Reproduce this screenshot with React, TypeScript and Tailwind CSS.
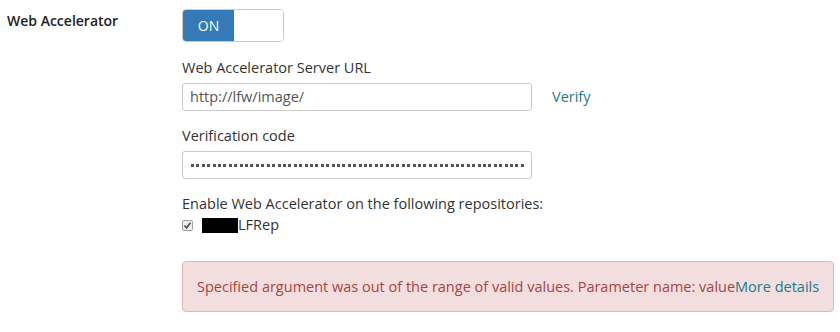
import React from "react";

export default function App() {
  const dots = Array.from({ length: 62 });
  return (
    <div
      className="w-[840px] h-[332px] bg-white text-[#333333] text-[14.5px]"
      style={{ fontFamily: '"Open Sans", "Noto Sans", sans-serif' }}
    >
      <div className="flex pt-[9px]">
        <div className="w-[182px] pl-[7px] pt-[2px] font-semibold text-[14px] leading-[20px] text-[#222]">
          Web Accelerator
        </div>
        <div className="flex flex-col w-[652px]">
          <div className="flex w-[102px] h-[33px] rounded-[4px] border border-[#cccccc] overflow-hidden">
            <div className="w-[51px] bg-[#337ab7] text-white flex items-center justify-center text-[14px]">
              ON
            </div>
            <div className="flex-1 bg-white" />
          </div>

          <div className="mt-[16px] leading-[20px]">Web Accelerator Server URL</div>
          <div className="flex items-center mt-[5px]">
            <div className="w-[350px] h-[28px] border border-[#cccccc] rounded-[3px] flex items-center px-[7px] text-[#555]">
              http://lfw/image/
            </div>
            <a className="ml-[20px] text-[#1b7b8c]">Verify</a>
          </div>

          <div className="mt-[15px] leading-[20px]">Verification code</div>
          <div className="mt-[5px] w-[350px] h-[28px] border border-[#cccccc] rounded-[3px] flex items-center pl-[8px]">
            <div className="flex justify-between w-[333px]">
              {dots.map((_, i) => (
                <div key={i} className="w-[3px] h-[3px] bg-[#555]" />
              ))}
            </div>
          </div>

          <div className="mt-[15px] leading-[20px]">
            Enable Web Accelerator on the following repositories:
          </div>
          <div className="flex items-center h-[22px]">
            <div className="w-[11px] h-[11px] border border-[#a0a0a0] rounded-[2px] bg-[#eeeeee] flex items-center justify-center">
              <svg width="9" height="9" viewBox="0 0 9 9">
                <path d="M1.5 4.5 L3.5 6.8 L7.5 1.8" stroke="#555" strokeWidth="1.8" fill="none" />
              </svg>
            </div>
            <div className="ml-[9px] w-[36px] h-[15px] bg-black" />
            <span>LFRep</span>
          </div>

          <div className="mt-[25px] w-[652px] h-[51px] bg-[#f2dede] border border-[#e3b6b9] rounded-[4px] flex items-center pl-[14px] text-[#a94442]">
            Specified argument was out of the range of valid values. Parameter name: value
            <a className="text-[#1b7b8c]">More details</a>
          </div>
        </div>
      </div>
    </div>
  );
}
